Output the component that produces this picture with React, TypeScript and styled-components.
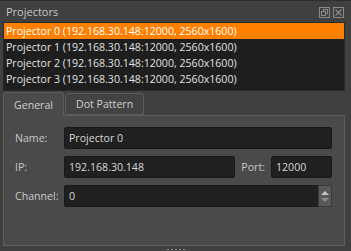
import React from "react";
import styled, { createGlobalStyle } from "styled-components";

const GlobalStyle = createGlobalStyle`
  html, body { margin: 0; padding: 0; background: #404040; }
  body { font-family: "Open Sans", "Noto Sans", sans-serif; font-size: 10.6px; }
  * { box-sizing: border-box; }
`;

const Window = styled.div`
  width: 351px;
  height: 251px;
  display: flex;
  flex-direction: column;
  background: #404040;
  border-top: 1px solid #2e2e2e;
  overflow: hidden;
`;

const TitleBar = styled.div`
  height: 21px;
  display: flex;
  align-items: center;
  justify-content: space-between;
  padding: 0 7px 0 6px;
`;

const Title = styled.span`
  color: #c6c6c6;
  font-size: 11px;
`;

const TitleButtons = styled.div`
  display: flex;
  gap: 3px;
  margin-top: 1px;
`;

const List = styled.div`
  height: 69px;
  margin: 0 6px 0 3px;
  background: #1e1e1e;
  border: 1px solid #2a2a2a;
  display: flex;
  flex-direction: column;
`;

const ListItem = styled.div<{ $selected?: boolean }>`
  height: 16px;
  line-height: 16px;
  padding-left: 2px;
  color: ${(p) => (p.$selected ? "#ffffff" : "#e2e2e2")};
  background: ${(p) => (p.$selected ? "#ff8000" : "transparent")};
  white-space: nowrap;
`;

const TabBar = styled.div`
  height: 24px;
  display: flex;
  align-items: flex-end;
  padding-left: 3px;
  gap: 1px;
`;

const Tab = styled.div<{ $active?: boolean }>`
  height: ${(p) => (p.$active ? 24 : 22)}px;
  padding: 0 10px;
  display: flex;
  align-items: center;
  justify-content: center;
  color: ${(p) => (p.$active ? "#d0d0d0" : "#cfcfcf")};
  background: ${(p) => (p.$active ? "#4a4a4a" : "#434343")};
  border: 1px solid #5c5c5c;
  border-bottom: ${(p) => (p.$active ? "none" : "1px solid #5c5c5c")};
  border-radius: 3px 3px 0 0;
  margin-bottom: ${(p) => (p.$active ? -1 : 0)}px;
  position: relative;
  z-index: ${(p) => (p.$active ? 1 : 0)};
`;

const Panel = styled.div`
  flex: 1;
  margin: 0 6px 0 3px;
  background: #4a4a4a;
  border: 1px solid #5e5e5e;
  padding: 11px 12px 0 11px;
  display: grid;
  grid-template-columns: 49px 1fr;
  grid-auto-rows: 22px;
  row-gap: 7px;
  align-content: start;
`;

const Label = styled.label`
  color: #c8c8c8;
  display: flex;
  align-items: center;
`;

const Row = styled.div`
  display: flex;
  align-items: center;
`;

const Input = styled.div<{ $width?: number }>`
  height: 22px;
  flex: ${(p) => (p.$width ? "none" : "1")};
  width: ${(p) => (p.$width ? `${p.$width}px` : "auto")};
  background: #202020;
  border: 1px solid #191919;
  border-radius: 2px;
  color: #d8d8d8;
  padding-left: 4px;
  display: flex;
  align-items: center;
  position: relative;
`;

const PortLabel = styled.span`
  color: #c8c8c8;
  margin: 0 6px 0 6px;
`;

const Spinner = styled.div`
  position: absolute;
  right: -1px;
  top: -1px;
  bottom: -1px;
  width: 14px;
  background: #585858;
  border: 1px solid #3a3a3a;
  border-radius: 0 2px 2px 0;
  display: flex;
  flex-direction: column;
  align-items: center;
  justify-content: center;
  gap: 3px;
`;

const Arrow = styled.div<{ $up?: boolean }>`
  width: 0;
  height: 0;
  border-left: 4px solid transparent;
  border-right: 4px solid transparent;
  ${(p) =>
    p.$up
      ? "border-bottom: 4px solid #c4c4c4;"
      : "border-top: 4px solid #8a8a8a;"}
`;

const BottomStrip = styled.div`
  height: 5px;
  display: flex;
  justify-content: center;
  align-items: flex-end;
  padding-bottom: 1px;
  gap: 2px;
`;

const GripDot = styled.span`
  width: 2px;
  height: 1px;
  background: #8c8c8c;
`;

const FloatIcon = () => (
  <svg width="11" height="11" viewBox="0 0 11 11" shapeRendering="crispEdges">
    <rect x="0.5" y="0.5" width="10" height="10" fill="none" stroke="#8a8a8a" rx="1" />
    <rect x="4.5" y="2.5" width="4" height="4" fill="none" stroke="#8a8a8a" />
    <rect x="2.5" y="4.5" width="4" height="4" fill="#404040" stroke="#8a8a8a" />
  </svg>
);

const CloseIcon = () => (
  <svg width="11" height="11" viewBox="0 0 11 11">
    <rect x="0.5" y="0.5" width="10" height="10" fill="none" stroke="#8a8a8a" rx="1" shapeRendering="crispEdges" />
    <path d="M2.5 2.5 L8.5 8.5 M8.5 2.5 L2.5 8.5" stroke="#8a8a8a" strokeWidth="1.2" />
  </svg>
);

const projectors = [0, 1, 2, 3].map(
  (i) => `Projector ${i} (192.168.30.148:12000, 2560x1600)`
);

export default function App() {
  return (
    <>
      <GlobalStyle />
      <Window>
        <TitleBar>
          <Title>Projectors</Title>
          <TitleButtons>
            <FloatIcon />
            <CloseIcon />
          </TitleButtons>
        </TitleBar>
        <List>
          {projectors.map((p, i) => (
            <ListItem key={i} $selected={i === 0}>
              {p}
            </ListItem>
          ))}
        </List>
        <TabBar>
          <Tab $active>General</Tab>
          <Tab>Dot Pattern</Tab>
        </TabBar>
        <Panel>
          <Label>Name:</Label>
          <Input>Projector 0</Input>
          <Label>IP:</Label>
          <Row>
            <Input>192.168.30.148</Input>
            <PortLabel>Port:</PortLabel>
            <Input $width={61}>12000</Input>
          </Row>
          <Label>Channel:</Label>
          <Input>
            0
            <Spinner>
              <Arrow $up />
              <Arrow />
            </Spinner>
          </Input>
        </Panel>
        <BottomStrip>
          {[0, 1, 2, 3, 4].map((i) => (
            <GripDot key={i} />
          ))}
        </BottomStrip>
      </Window>
    </>
  );
}
